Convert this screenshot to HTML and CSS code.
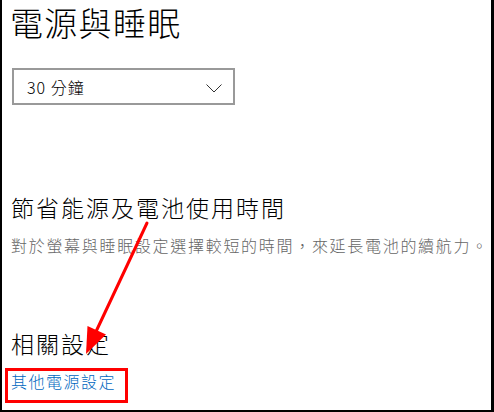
FILE: index.html
```html
<!DOCTYPE html>
<html lang="zh-Hant">
<head>
    <meta charset="UTF-8">
    <meta name="viewport" content="width=device-width, initial-scale=1.0">
    <title>電源與睡眠</title>
    <link rel="stylesheet" href="styles.css">
</head>
<body>

    <div class="settings-page">
        <h1 class="page-title">電源與睡眠</h1>

        <div class="combo-box">
            <span class="combo-value">30 分鐘</span>
            <svg class="combo-chevron" width="16" height="9" viewBox="0 0 16 9">
                <polyline points="0.5,0.5 8,8 15.5,0.5" fill="none" stroke="#333" stroke-width="1"/>
            </svg>
        </div>

        <h2 class="section-title saver-title">節省能源及電池使用時間</h2>
        <p class="section-desc">對於螢幕與睡眠設定選擇較短的時間，來延長電池的續航力。</p>

        <h2 class="section-title related-title">相關設定</h2>
        <div class="highlight-box">
            <a href="#" class="settings-link">其他電源設定</a>
        </div>

        <!-- annotation arrow drawn over the page -->
        <svg class="annotation" width="494" height="412" viewBox="0 0 494 412">
            <line x1="147" y1="223" x2="93" y2="338" stroke="#f00" stroke-width="3" stroke-linecap="round"/>
            <polygon points="86,354 87.5,326 106,334.5" fill="#f00"/>
        </svg>
    </div>

</body>
</html>
```

FILE: styles.css
```css
* {
    box-sizing: border-box;
}

body {
    margin: 0;
    background-color: #fff;
    font-family: "Noto Sans CJK TC", "Noto Sans", sans-serif;
}

.settings-page {
    position: relative;
    width: 494px;
    height: 412px;
    padding: 2px 0 0 9px;
    border-left: 2px solid #000;
    border-right: 3px solid #000;
    border-bottom: 2px solid #000;
    overflow: hidden;
}

.page-title {
    margin: 0 0 0 -1px;
    font-size: 33px;
    line-height: 40px;
    font-weight: 300;
    letter-spacing: 1.3px;
    color: #000;
}

.combo-box {
    display: flex;
    align-items: center;
    justify-content: space-between;
    width: 223px;
    height: 37px;
    margin: 26px 0 0 1px;
    padding: 0 11px 0 13px;
    border: 2px solid #999;
}

.combo-value {
    font-size: 16px;
    line-height: 20px;
    font-weight: 300;
    letter-spacing: 1px;
    color: #000;
}

.combo-chevron {
    margin-top: 3px;
}

.section-title {
    margin: 0;
    font-size: 23px;
    line-height: 29px;
    font-weight: 300;
    letter-spacing: 2px;
    color: #000;
}

.saver-title {
    margin-top: 88px;
}

.section-desc {
    margin: 13px 0 0;
    font-size: 16px;
    line-height: 20px;
    font-weight: 300;
    letter-spacing: 1.7px;
    color: #666;
}

.related-title {
    margin-top: 74px;
}

.highlight-box {
    display: inline-block;
    margin: 10px 0 0 -6px;
    padding: 0 9px 9px 3px;
    border: 3px solid #f00;
}

.settings-link {
    display: block;
    font-size: 16px;
    line-height: 20px;
    font-weight: 300;
    letter-spacing: 1.5px;
    color: #0067c0;
    text-decoration: none;
}

.annotation {
    position: absolute;
    top: 0;
    left: -2px;
    pointer-events: none;
}
```
